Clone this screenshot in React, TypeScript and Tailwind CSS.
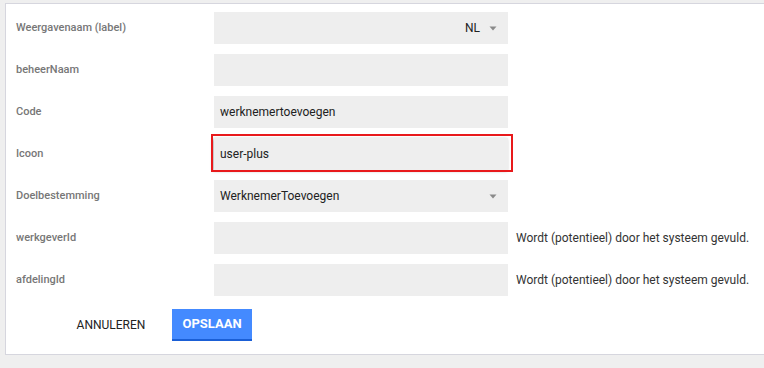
import React from "react";

interface Row {
  label: string;
  value?: string;
  select?: boolean;
  align?: "left" | "right";
  hint?: string;
  highlight?: boolean;
}

const rows: Row[] = [
  { label: "Weergavenaam (label)", value: "NL", select: true, align: "right" },
  { label: "beheerNaam" },
  { label: "Code", value: "werknemertoevoegen" },
  { label: "Icoon", value: "user-plus", highlight: true },
  { label: "Doelbestemming", value: "WerknemerToevoegen", select: true },
  { label: "werkgeverId", hint: "Wordt (potentieel) door het systeem gevuld." },
  { label: "afdelingId", hint: "Wordt (potentieel) door het systeem gevuld." },
];

function Caret() {
  return (
    <svg width="8" height="5" viewBox="0 0 8 5" className="shrink-0">
      <path d="M0.5 0.5h7L4 4.5z" fill="#8a8a8a" />
    </svg>
  );
}

function Field({ row }: { row: Row }) {
  return (
    <div
      className={`relative flex h-[32px] w-[294px] items-center bg-[#eeeeee] px-[6px] text-[12px] text-[#222] ${
        row.highlight ? "shadow-[-1px_1px_3px_rgba(0,0,0,0.35)]" : ""
      }`}
    >
      {row.select ? (
        <div
          className={`flex flex-1 items-center ${
            row.align === "right" ? "justify-end gap-[9px] pr-[5px]" : "justify-between pr-[5px]"
          }`}
        >
          <span>{row.value}</span>
          <Caret />
        </div>
      ) : (
        <span>{row.value}</span>
      )}
      {row.highlight ? (
        <span className="pointer-events-none absolute left-[-3px] top-[-4px] h-[38px] w-[302px] border-2 border-[#e8191b]" />
      ) : null}
    </div>
  );
}

export default function App() {
  return (
    <div className="h-[368px] w-[764px] overflow-hidden bg-[#efefef] pt-[3px] pl-[5px] font-['Roboto',sans-serif]">
      <div className="h-[352px] w-[800px] border border-[#d6d6de] bg-white pt-[8px] pl-[10px]">
        {rows.map((row) => (
          <div key={row.label} className="mb-[10px] flex h-[32px] items-center">
            <div className="w-[198px] text-[11px] font-medium text-[#777]">{row.label}</div>
            <Field row={row} />
            {row.hint ? (
              <div className="ml-[8px] text-[12px] text-[#333]">{row.hint}</div>
            ) : null}
          </div>
        ))}
        <div className="mt-[13px] flex items-center">
          <button
            type="button"
            className="ml-[55px] h-[32px] w-[80px] text-[12px] text-[#222] uppercase"
          >
            Annuleren
          </button>
          <button
            type="button"
            className="ml-[21px] h-[32px] w-[80px] border-b-2 border-[#1a5fd6] bg-[#448aff] text-[13px] font-bold text-white uppercase"
          >
            Opslaan
          </button>
        </div>
      </div>
    </div>
  );
}
